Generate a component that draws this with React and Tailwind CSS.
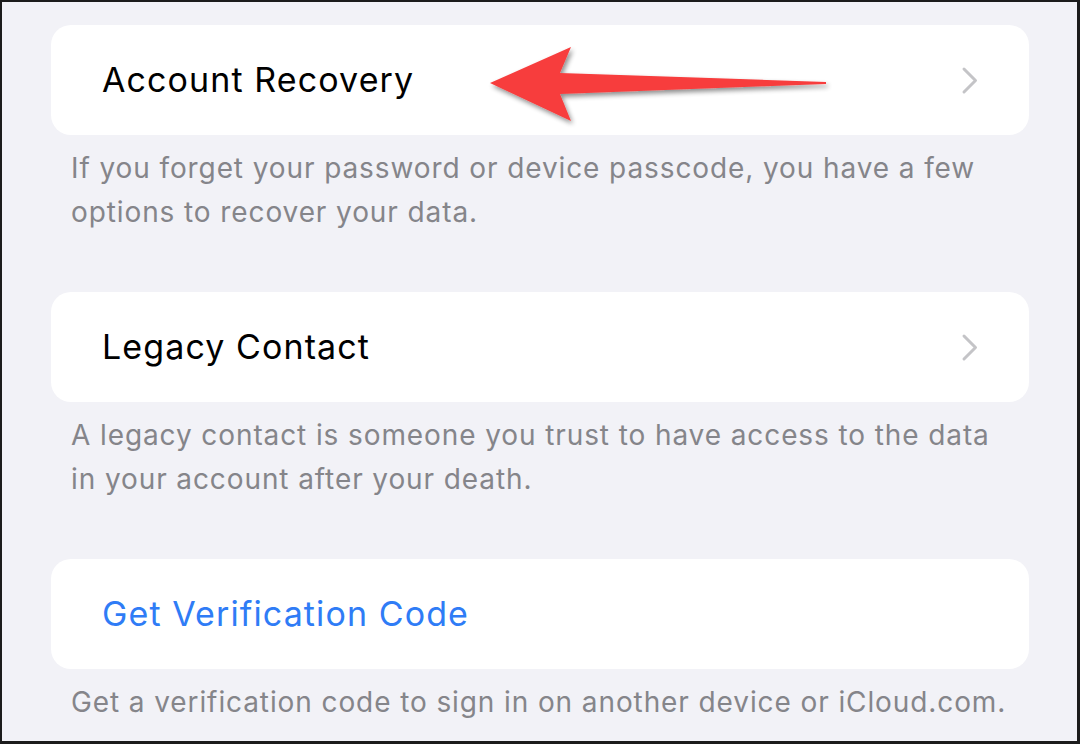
import React from "react";

const sections = [
  {
    id: 1,
    label: "Account Recovery",
    chevron: true,
    note: ["If you forget your password or device passcode, you have a few", "options to recover your data."],
  },
  {
    id: 2,
    label: "Legacy Contact",
    chevron: true,
    note: ["A legacy contact is someone you trust to have access to the data", "in your account after your death."],
  },
  {
    id: 3,
    label: "Get Verification Code",
    chevron: false,
    link: true,
    note: ["Get a verification code to sign in on another device or iCloud.com."],
  },
];

const Chevron = () => (
  <svg width="18" height="29" viewBox="0 0 18 29" fill="none">
    <path d="M3 3 L14.5 14.5 L3 26" stroke="#c4c4c7" strokeWidth="3" strokeLinecap="round" strokeLinejoin="round" />
  </svg>
);

const RedArrow = () => (
  <svg className="absolute left-[486px] top-[18px] pointer-events-none" width="360" height="120" viewBox="0 0 360 120">
    <defs>
      <filter id="arrowShadow" x="-10%" y="-30%" width="120%" height="160%">
        <feGaussianBlur in="SourceAlpha" stdDeviation="2.5" />
        <feOffset dx="2" dy="3" result="blur" />
        <feComponentTransfer>
          <feFuncA type="linear" slope="0.45" />
        </feComponentTransfer>
        <feMerge>
          <feMergeNode />
          <feMergeNode in="SourceGraphic" />
        </feMerge>
      </filter>
    </defs>
    <polygon
      points="2,63 83,27 72,53 338,62 338,64 72,74 83,101"
      fill="#f73d3d"
      filter="url(#arrowShadow)"
    />
  </svg>
);

export default function App() {
  return (
    <div
      className="relative w-[1080px] h-[744px] overflow-hidden border-2 border-r-[3px] border-b-[3px] border-[#1c1c1c] bg-[#f2f2f7] pl-[49px] pt-[23px]"
      style={{ fontFamily: "Inter, 'Noto Sans', sans-serif" }}
    >
      <div className="w-[978px] flex flex-col">
        {sections.map((s, i) => (
          <div key={s.id} className={i < sections.length - 1 ? "mb-[58px]" : ""}>
            <div className="h-[110px] rounded-[20px] bg-white flex items-center justify-between pl-[51px] pr-[50px]">
              <span
                className={
                  "text-[34px] tracking-[1.1px] leading-none " +
                  (s.link ? "text-[#2f7cf6]" : "text-black")
                }
              >
                {s.label}
              </span>
              {s.chevron && <Chevron />}
            </div>
            <div className="pt-[11px] pl-[20px] text-[28px] leading-[44px] text-[#85858a] tracking-[0.9px]">
              {s.note.map((line) => (
                <div key={line} className="whitespace-nowrap">{line}</div>
              ))}
            </div>
          </div>
        ))}
      </div>
      <RedArrow />
    </div>
  );
}
